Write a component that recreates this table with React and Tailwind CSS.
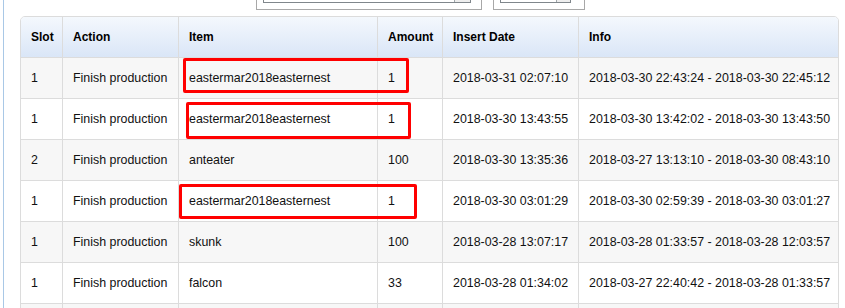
const rows = [
  ["1", "Finish production", "eastermar2018easternest", "1", "2018-03-31 02:07:10", "2018-03-30 22:43:24 - 2018-03-30 22:45:12"],
  ["1", "Finish production", "eastermar2018easternest", "1", "2018-03-30 13:43:55", "2018-03-30 13:42:02 - 2018-03-30 13:43:50"],
  ["2", "Finish production", "anteater", "100", "2018-03-30 13:35:36", "2018-03-27 13:13:10 - 2018-03-30 08:43:10"],
  ["1", "Finish production", "eastermar2018easternest", "1", "2018-03-30 03:01:29", "2018-03-30 02:59:39 - 2018-03-30 03:01:27"],
  ["1", "Finish production", "skunk", "100", "2018-03-28 13:07:17", "2018-03-28 01:33:57 - 2018-03-28 12:03:57"],
  ["1", "Finish production", "falcon", "33", "2018-03-28 01:34:02", "2018-03-27 22:40:42 - 2018-03-28 01:33:57"],
  ["", "", "", "", "", ""],
];

const headers = ["Slot", "Action", "Item", "Amount", "Insert Date", "Info"];

const cols = "grid grid-cols-[41px_116px_199px_65px_136px_1fr]";

function Cell({ children, first }) {
  return (
    <div className={`flex items-center pl-[10px] whitespace-nowrap ${first ? "" : "border-l border-[#dcdcdc]"}`}>
      {children}
    </div>
  );
}

function Select({ outer, inner, btn }) {
  return (
    <div className={`h-[10px] border-x border-b border-[#a8a8a8] bg-white ${outer}`}>
      <div className={`ml-[6px] h-[3px] flex justify-end border-x border-b border-[#80878c] ${inner}`}>
        <div className={`h-full border-l border-[#a0a6aa] bg-[#eeeeee] ${btn}`} />
      </div>
    </div>
  );
}

export default function App() {
  return (
    <div className="relative h-[308px] w-[845px] overflow-hidden bg-white font-['Liberation_Sans',Arial,sans-serif] text-[#111]">
      <div className="ml-[3px] h-full border-l border-[#a9c8e6] pl-[16px]">
        <div className="flex gap-[11px] pl-[236px]">
          <Select outer="w-[226px]" inner="w-[208px]" btn="w-[16px]" />
          <Select outer="w-[92px]" inner="w-[71px]" btn="w-[14px]" />
        </div>

        <div className="mt-[6px] w-[819px] overflow-hidden rounded-t-[5px] border border-[#dcdcdc]">
          <div className={`${cols} h-[40px] bg-linear-to-b from-[#f4f8fd] to-[#dae6f7] text-[12px] font-bold text-black`}>
            {headers.map((h, i) => (
              <Cell key={h} first={i === 0}>{h}</Cell>
            ))}
          </div>
          {rows.map((r, ri) => (
            <div
              key={ri}
              className={`${cols} h-[41px] border-t border-[#dcdcdc] text-[12.4px] ${ri % 2 === 0 ? "bg-[#f7f7f7]" : "bg-white"}`}
            >
              {r.map((c, ci) => (
                <Cell key={ci} first={ci === 0}>{c}</Cell>
              ))}
            </div>
          ))}
        </div>
      </div>

      {/* red annotation boxes */}
      <div className="absolute left-[183px] top-[58px] h-[35px] w-[226px] rounded-[2px] border-[3px] border-[#ff0000]" />
      <div className="absolute left-[186px] top-[102px] h-[37px] w-[225px] rounded-[2px] border-[3px] border-[#ff0000]" />
      <div className="absolute left-[179px] top-[184px] h-[35px] w-[238px] rounded-[2px] border-[3px] border-[#ff0000]" />
    </div>
  );
}
